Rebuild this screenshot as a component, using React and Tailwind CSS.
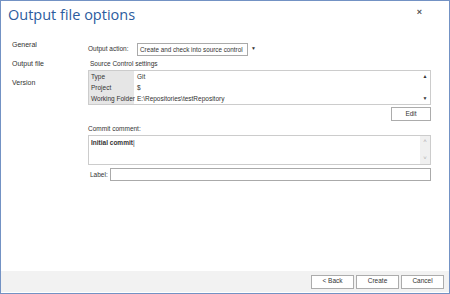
import React from 'react';

const Btn = ({ children, className = '' }) => (
  <button className={`h-[14px] border border-[#acacac] bg-white text-[6.5px] leading-none text-[#333] ${className}`}>
    {children}
  </button>
);

const Row = ({ label, value }) => (
  <div className="flex h-[11px] items-center whitespace-nowrap">
    <div className="w-[45px] h-full bg-[#e6e6e6] pl-[2px] leading-[11px]">{label}</div>
    <div className="pl-[3px] leading-[11px]">{value}</div>
  </div>
);

const App = () => {
  return (
    <div className="w-[450px] h-[294px] bg-white border border-[#7392c4] flex flex-col text-[#333] overflow-hidden" style={{ fontFamily: '"Liberation Sans", Arial, sans-serif' }}>
      <div className="flex items-start justify-between pl-[7px] pr-[27px] pt-[5px] h-[34px]">
        <h1 className="text-[14.5px] leading-[18px] text-[#2c5c9e] font-normal" style={{ fontFamily: '"Open Sans", sans-serif' }}>Output file options</h1>
        <span className="text-[9px] leading-none text-[#555] mt-[2px] font-bold">×</span>
      </div>

      <div className="flex flex-1">
        <div className="w-[76px] pl-[11px] pt-[5px] flex flex-col gap-[9px] text-[7px] leading-[10px] text-[#333]">
          <span>General</span>
          <span>Output file</span>
          <span>Version</span>
        </div>

        <div className="flex-1 pl-[11px] pr-[18px] text-[6.5px] text-[#333]">
          <div className="flex items-center mt-[7px] h-[14px] whitespace-nowrap">
            <span className="w-[49px]">Output action:</span>
            <div className="h-[13px] w-[111px] border border-[#aaa] px-[2px] leading-[11px] overflow-hidden text-[6.3px]">Create and check into source control</div>
            <span className="ml-[3px] text-[5px]">▼</span>
          </div>

          <div className="mt-[3px] ml-[2px] leading-[10px]">Source Control settings</div>

          <div className="mt-[1px] border border-[#ccc] flex h-[35px]">
            <div className="flex-1 flex flex-col justify-center">
              <Row label="Type" value="Git" />
              <Row label="Project" value="$" />
              <Row label="Working Folder" value="E:\Repositories\testRepository" />
            </div>
            <div className="w-[10px] flex flex-col justify-between items-center py-[2px] text-[5px] text-[#333]">
              <span>▲</span>
              <span>▼</span>
            </div>
          </div>

          <div className="flex justify-end mt-[2px]">
            <Btn className="w-[40px]">Edit</Btn>
          </div>

          <div className="mt-[3px] leading-[10px]">Commit comment:</div>

          <div className="mt-[1px] border border-[#ccc] flex h-[30px]">
            <div className="flex-1 px-[2px] pt-[2px] font-bold leading-[10px]">Initial commit<span className="font-normal">|</span></div>
            <div className="w-[10px] bg-[#f0f0f0] flex flex-col justify-between items-center py-[1px] text-[6px] text-[#aaa]">
              <span>˄</span>
              <span>˅</span>
            </div>
          </div>

          <div className="flex items-center mt-[3px] h-[13px]">
            <span className="w-[22px] pl-[2px]">Label:</span>
            <div className="flex-1 h-[13px] border border-[#aaa]" />
          </div>
        </div>
      </div>

      <div className="h-[21px] bg-[#f2f2f2] flex items-center justify-end gap-[2px] pr-[5px] mb-[1px]">
        <Btn className="w-[43px]">&lt; Back</Btn>
        <Btn className="w-[43px]">Create</Btn>
        <Btn className="w-[43px]">Cancel</Btn>
      </div>
    </div>
  );
};

export default App;
